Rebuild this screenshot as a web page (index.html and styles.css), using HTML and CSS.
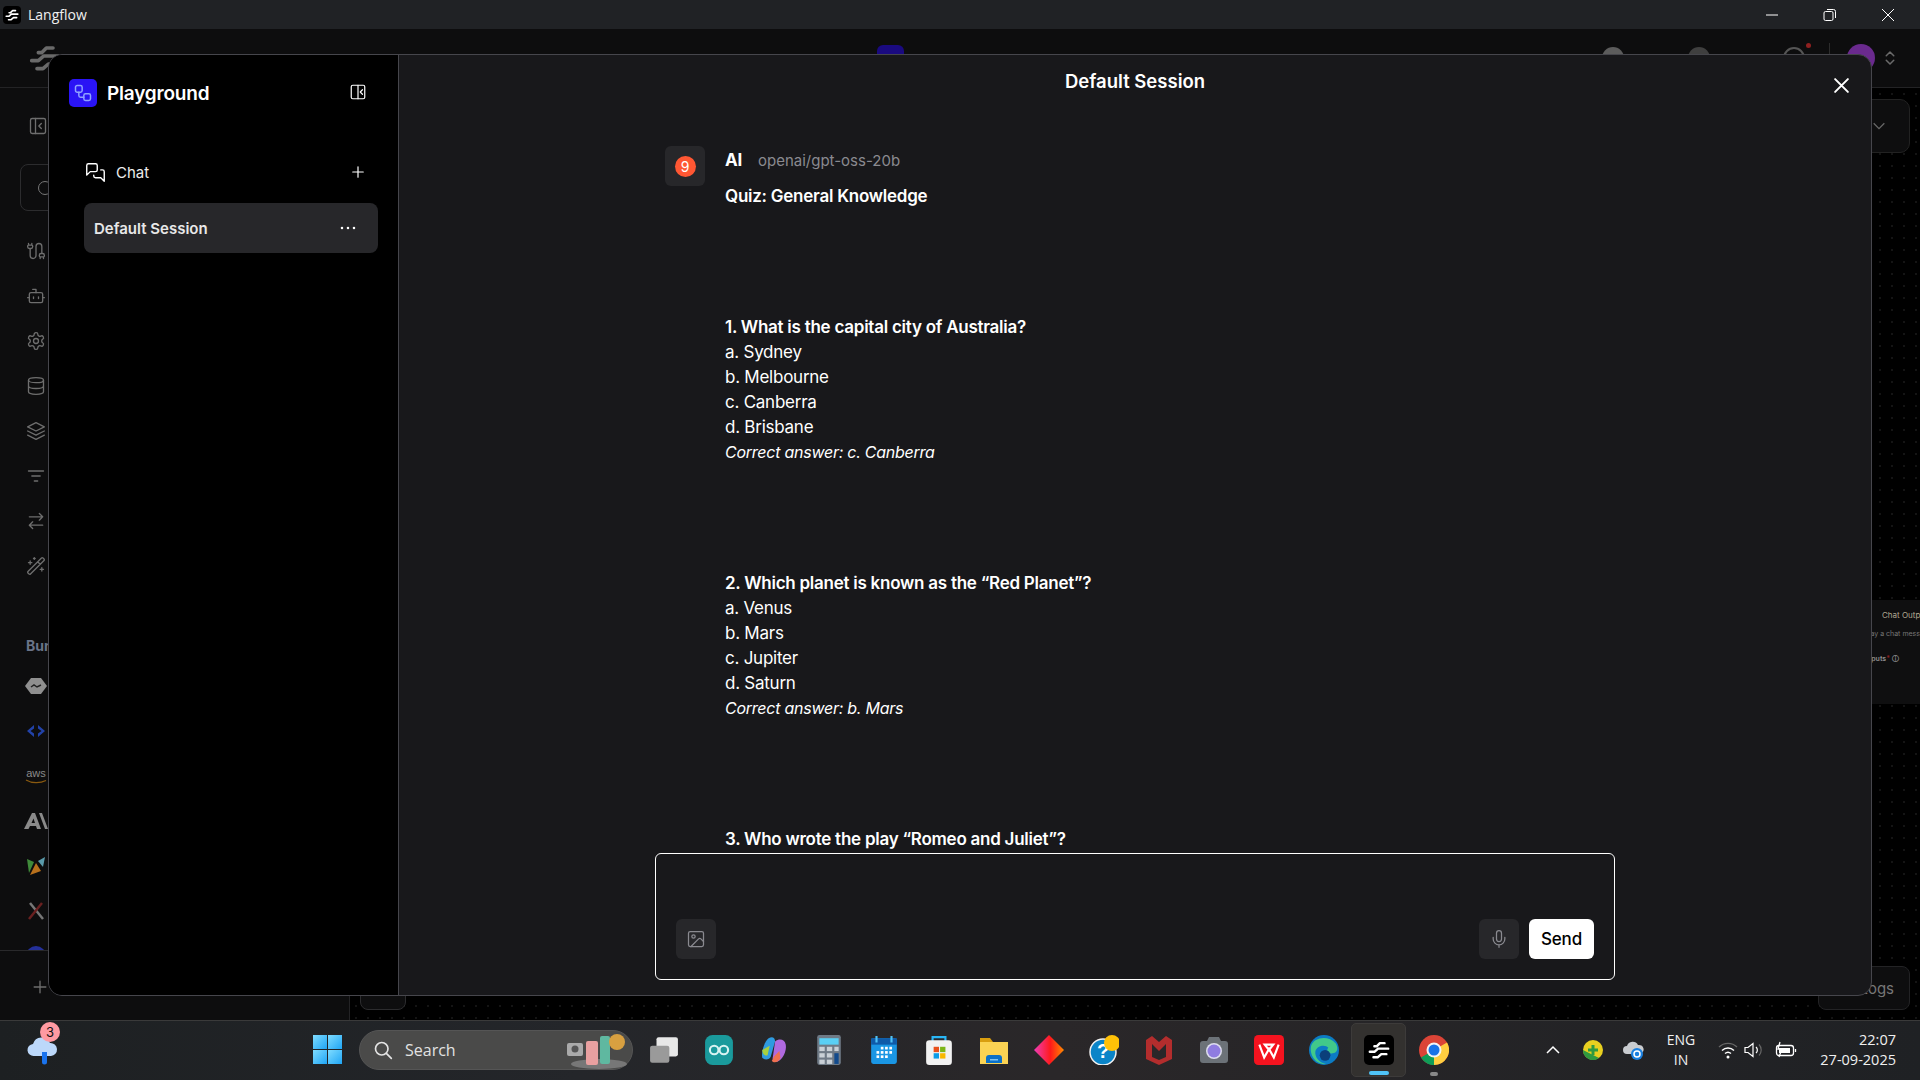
FILE: index.html
```html
<!DOCTYPE html>
<html lang="en">
<head>
<meta charset="utf-8">
<title>Langflow</title>
<link rel="stylesheet" href="styles.css">
</head>
<body>
<svg class="defs" width="0" height="0" aria-hidden="true">
  <symbol id="lf" viewBox="0 0 24 24"><path d="M7 8h2.500L13 4.500h5M2 14h5l4-3.500h11M6 20h4.500l4-3.500H20" fill="none" stroke="currentColor" stroke-width="2.700" stroke-linecap="round" stroke-linejoin="round"/></symbol>
</svg>

<header class="titlebar">
  <div class="tb-app">
    <span class="tb-appicon"><svg class="i-14"><use href="#lf"/></svg></span>
    <span class="tb-name">Langflow</span>
  </div>
  <div class="winctl">
    <span class="winbtn"><svg width="14" height="14" viewBox="0 0 14 14"><path d="M1 7h12" stroke="#fff" stroke-width="1"/></svg></span>
    <span class="winbtn"><svg width="14" height="14" viewBox="0 0 14 14" fill="none" stroke="#fff" stroke-width="1"><rect x="1" y="3.5" width="9" height="9" rx="1.5"/><path d="M4 1.5h6.5a2 2 0 0 1 2 2V10"/></svg></span>
    <span class="winbtn"><svg width="14" height="14" viewBox="0 0 14 14"><path d="M1 1l12 12M13 1L1 13" stroke="#fff" stroke-width="1"/></svg></span>
  </div>
</header>

<div class="app">
  <div class="appheader">
    <svg class="applogo"><use href="#lf"/></svg>
    <span class="crumb-icon"></span>
    <div class="apphead-right">
      <span class="peek peek-a"></span>
      <span class="peek peek-b"></span>
      <span class="peek-bell"><i class="reddot"></i></span>
      <span class="headdiv"></span>
      <span class="avatar"></span>
      <svg class="chev" viewBox="0 0 24 24" fill="none" stroke="currentColor" stroke-width="2" stroke-linecap="round" stroke-linejoin="round"><path d="M7 15l5 5 5-5M7 9l5-5 5 5"/></svg>
    </div>
  </div>
  <div class="appbody">
    <aside class="appside">
      <div class="appside-top">
        <svg class="dim-ic" viewBox="0 0 24 24"><rect x="3" y="3" width="18" height="18" rx="2"/><path d="M9 3v18M16 15l-3-3 3-3"/></svg>
      </div>
      <div class="searchbox"><span class="searchdot"></span></div>
      <nav class="navicons">
        <svg class="dim-ic" viewBox="0 0 24 24"><path d="M17 21v-2a1 1 0 0 1-1-1v-1a2 2 0 0 1 2-2h2a2 2 0 0 1 2 2v1a1 1 0 0 1-1 1M19 15V6.5a1 1 0 0 0-7 0v11a1 1 0 0 1-7 0V9M21 21v-2h-4M3 5h4V3M7 5a1 1 0 0 1 1 1v1a2 2 0 0 1-2 2H4a2 2 0 0 1-2-2V6a1 1 0 0 1 1-1V3"/></svg>
        <svg class="dim-ic" viewBox="0 0 24 24"><path d="M12 8V4H8M2 14h2M20 14h2M15 13v2M9 13v2"/><rect x="4" y="8" width="16" height="12" rx="2"/></svg>
        <svg class="dim-ic" viewBox="0 0 24 24"><path d="M12.22 2h-.44a2 2 0 0 0-2 2v.18a2 2 0 0 1-1 1.73l-.43.25a2 2 0 0 1-2 0l-.15-.08a2 2 0 0 0-2.73.73l-.22.38a2 2 0 0 0 .73 2.73l.15.1a2 2 0 0 1 1 1.72v.51a2 2 0 0 1-1 1.74l-.15.09a2 2 0 0 0-.73 2.73l.22.38a2 2 0 0 0 2.73.73l.15-.08a2 2 0 0 1 2 0l.43.25a2 2 0 0 1 1 1.73V20a2 2 0 0 0 2 2h.44a2 2 0 0 0 2-2v-.18a2 2 0 0 1 1-1.73l.43-.25a2 2 0 0 1 2 0l.15.08a2 2 0 0 0 2.73-.73l.22-.39a2 2 0 0 0-.73-2.73l-.15-.08a2 2 0 0 1-1-1.74v-.5a2 2 0 0 1 1-1.74l.15-.09a2 2 0 0 0 .73-2.73l-.22-.38a2 2 0 0 0-2.73-.73l-.15.08a2 2 0 0 1-2 0l-.43-.25a2 2 0 0 1-1-1.73V4a2 2 0 0 0-2-2z"/><circle cx="12" cy="12" r="3"/></svg>
        <svg class="dim-ic" viewBox="0 0 24 24"><ellipse cx="12" cy="5" rx="9" ry="3"/><path d="M3 5v14a9 3 0 0 0 18 0V5M3 12a9 3 0 0 0 18 0"/></svg>
        <svg class="dim-ic" viewBox="0 0 24 24"><path d="M12 2 2 7l10 5 10-5-10-5ZM2 17l10 5 10-5M2 12l10 5 10-5"/></svg>
        <svg class="dim-ic" viewBox="0 0 24 24"><path d="M3 6h18M7 12h10M10 18h4"/></svg>
        <svg class="dim-ic" viewBox="0 0 24 24"><path d="M16 3l4 4-4 4M20 7H4M8 21l-4-4 4-4M4 17h16"/></svg>
        <svg class="dim-ic" viewBox="0 0 24 24"><path d="M21.64 3.64l-1.28-1.28a1.21 1.21 0 0 0-1.72 0L2.36 18.64a1.21 1.21 0 0 0 0 1.72l1.28 1.28a1.2 1.2 0 0 0 1.72 0L21.64 5.36a1.2 1.2 0 0 0 0-1.72M14 7l3 3M5 6v4M19 14v4M10 2v2M7 8H3M21 16h-4M11 3H9"/></svg>
      </nav>
      <div class="bundle-title">Bundles</div>
      <div class="bundle-list">
        <svg class="logo" viewBox="0 0 24 24"><path d="M7 4h10l6 8-6 8H7l-6-8z" fill="#8f8f8f"/><path d="M7 13l3-2 3 2 4-2" fill="none" stroke="#222" stroke-width="1.5"/></svg>
        <svg class="logo" viewBox="0 0 24 24"><path d="M10 6l-7 6 7 6V14.500L6.500 12 10 9.500zM14 6l7 6-7 6v-3.500l3.500-2.500L14 9.500z" fill="#2242a8"/></svg>
        <svg class="logo" viewBox="0 0 24 24"><text x="12" y="13" class="logo-aws">aws</text><path d="M2 16c6 3.500 14 3.500 20 .5" fill="none" stroke="#8a5a10" stroke-width="1.300"/></svg>
        <svg class="logo" viewBox="0 0 24 24"><path d="M0 20L8 4h3l6 16h-4l-1-3H6l-1.500 3zM7.500 14h3.500L9.500 9.500zM15 4h3l6 16h-3z" fill="#8a8a8a"/></svg>
        <svg class="logo" viewBox="0 0 24 24"><path d="M3 5l7 3-5 11z" fill="#3f8a3a"/><path d="M21 3l-2 10-5-6z" fill="#5a9aaa"/><path d="M12 9l5 8-11 4z" fill="#b8701c"/></svg>
        <svg class="logo" viewBox="0 0 24 24"><path d="M6 4l13 16" fill="none" stroke="#777" stroke-width="2.500"/><path d="M18 4L5 20" fill="none" stroke="#6a2020" stroke-width="2.500"/></svg>
        <svg class="logo" viewBox="0 0 24 24"><circle cx="12" cy="12" r="10" fill="#24309a"/></svg>
      </div>
      <div class="appside-foot">
        <svg class="dim-ic" viewBox="0 0 24 24"><path d="M5 12h14M12 5v14"/></svg>
      </div>
    </aside>
    <main class="canvas">
      <span class="cv-drop"><svg class="cv-chev" viewBox="0 0 24 24" fill="none" stroke="currentColor" stroke-width="2"><path d="M4 8l8 8 8-8"/></svg></span>
      <div class="cv-node">
        <div class="cv-node-title">Chat Output</div>
        <div class="cv-node-desc">Display a chat message</div>
        <div class="cv-node-row">Inputs<i class="cv-req">*</i> ⓘ</div>
      </div>
      <span class="cv-tab"></span>
      <span class="cv-logs">Logs</span>
    </main>
  </div>

  <section class="modal">
    <aside class="pg-side">
      <div class="pg-head">
        <div class="pg-brand">
          <span class="pg-logo"><svg viewBox="0 0 24 24" fill="none" stroke="#8fa2ff" stroke-width="1.800" stroke-linecap="round"><rect x="3" y="3" width="8" height="8" rx="2"/><path d="M7 11v4a2 2 0 0 0 2 2h4"/><rect x="13" y="13" width="8" height="8" rx="2"/></svg></span>
          <span class="pg-title">Playground</span>
        </div>
        <svg class="wh-ic ic-16 pg-collapse" viewBox="0 0 24 24"><rect x="3" y="3" width="18" height="18" rx="2"/><path d="M12 3v18M18 15l-3-3 3-3"/></svg>
      </div>
      <div class="pg-chat">
        <div class="pg-chatlabel">
          <svg class="wh-ic ic-20" viewBox="0 0 24 24"><path d="M14 9a2 2 0 0 1-2 2H6l-4 4V4a2 2 0 0 1 2-2h8a2 2 0 0 1 2 2zM18 9h2a2 2 0 0 1 2 2v11l-4-4h-6a2 2 0 0 1-2-2v-1"/></svg>
          <span>Chat</span>
        </div>
        <svg class="wh-ic ic-16" viewBox="0 0 24 24"><path d="M5 12h14M12 5v14"/></svg>
      </div>
      <div class="pg-session">
        <span>Default Session</span>
        <svg class="ic-16" viewBox="0 0 24 24" fill="#fff"><circle cx="4" cy="12" r="1.700"/><circle cx="12" cy="12" r="1.700"/><circle cx="20" cy="12" r="1.700"/></svg>
      </div>
    </aside>
    <div class="pg-main">
      <header class="pg-mainhead">
        <h1>Default Session</h1>
        <svg class="wh-ic ic-close" viewBox="0 0 24 24"><path d="M3 3l18 18M21 3L3 21"/></svg>
      </header>
      <div class="messages">
        <article class="msg">
          <div class="msg-avatar"><span class="msg-dot">9</span></div>
          <div class="msg-body">
            <div class="msg-meta"><b>AI</b><span>openai/gpt-oss-20b</span></div>
            <p class="para"><strong>Quiz: General Knowledge</strong></p>
            <p class="para"><strong>1. What is the capital city of Australia?</strong><br><span class="opt">a. Sydney</span><br><span class="opt">b. Melbourne</span><br><span class="opt">c. Canberra</span><br><span class="opt">d. Brisbane</span><br><em>Correct answer: c. Canberra</em></p>
            <p class="para"><strong>2. Which planet is known as the “Red Planet”?</strong><br><span class="opt">a. Venus</span><br><span class="opt">b. Mars</span><br><span class="opt">c. Jupiter</span><br><span class="opt">d. Saturn</span><br><em>Correct answer: b. Mars</em></p>
            <p class="para"><strong>3. Who wrote the play “Romeo and Juliet”?</strong></p>
          </div>
        </article>
      </div>
      <div class="composer">
        <span class="cbtn"><svg class="ic-18" viewBox="0 0 24 24"><rect x="3" y="3" width="18" height="18" rx="2"/><circle cx="9" cy="9" r="2"/><path d="M21 15l-3.086-3.086a2 2 0 0 0-2.828 0L6 21"/></svg></span>
        <div class="composer-right">
          <span class="cbtn"><svg class="ic-18" viewBox="0 0 24 24"><path d="M12 2a3 3 0 0 0-3 3v7a3 3 0 0 0 6 0V5a3 3 0 0 0-3-3ZM19 10v2a7 7 0 0 1-14 0v-2M12 19v3"/></svg></span>
          <span class="send">Send</span>
        </div>
      </div>
    </div>
  </section>
</div>

<footer class="taskbar">
  <div class="tk-widget">
    <span class="weather">
      <svg class="weather-ic" viewBox="0 0 32 36"><path d="M8 24a6 6 0 0 1-1-12 9 9 0 0 1 17-1 6.500 6.500 0 0 1 1 13z" fill="#bcd8fa"/><path d="M16 20h5v10a2.500 2.500 0 0 1-5 0z" fill="#1a73ee"/></svg>
      <i class="weather-badge">3</i>
    </span>
  </div>
  <span class="tk-start"><i></i><i></i><i></i><i></i></span>
  <div class="tk-search">
    <svg class="tk-search-ic" viewBox="0 0 24 24" fill="none" stroke="#e4e4e4" stroke-width="2" stroke-linecap="round"><circle cx="10.500" cy="10.500" r="7.500"/><path d="M16 16l6 6"/></svg>
    <span>Search</span>
    <svg class="tk-search-art" viewBox="0 0 60 40"><ellipse cx="32" cy="34" rx="28" ry="5" fill="#777"/><rect x="0" y="13" width="16" height="13" rx="2" fill="#aaa" /><circle cx="8" cy="19" r="3.500" fill="#555"/><rect x="19" y="11" width="12" height="24" rx="2" fill="#e9a0a0"/><rect x="33" y="6" width="10" height="28" rx="2" fill="#5fb8a0"/><circle cx="50" cy="12" r="8" fill="#d8a040"/></svg>
  </div>
  <div class="tk-apps">
    <span class="tk-app"><svg viewBox="0 0 28 28"><rect x="7" y="2" width="20" height="18" rx="2" fill="#e8e8e8"/><rect x="1" y="10" width="18" height="16" rx="2" fill="#9a9a9a"/></svg></span>
    <span class="tk-app"><svg viewBox="0 0 28 28" fill="none"><rect x="1" y="0" width="26" height="28" rx="7" fill="#1a9a9c"/><circle cx="9.500" cy="14" r="4" stroke="#d9f3f2" stroke-width="2"/><circle cx="18.500" cy="14" r="4" stroke="#d9f3f2" stroke-width="2"/></svg></span>
    <span class="tk-app"><svg viewBox="0 0 28 28"><path d="M9 3c3-2 6-1 6 3l-4 14c-1 3-6 4-8 1-1-5 2-15 6-18z" fill="#2f9be0"/><path d="M3 14c0 3 2 6 5 5l2-9z" fill="#a8d040"/><path d="M15 6c4-3 9-2 10 3 1 6-3 14-8 16-3 0-5-2-4-5z" fill="#b06ae0"/><path d="M14 20l5-5 1 6c-1 4-6 6-8 3z" fill="#f07050"/></svg></span>
    <span class="tk-app"><svg viewBox="0 0 28 28"><rect x="3" y="0" width="22" height="28" rx="2" fill="#6f7a86"/><rect x="5" y="3" width="18" height="6" fill="#5ad0f5"/><g fill="#c9d0d6"><rect x="5" y="11" width="5" height="4"/><rect x="12" y="11" width="5" height="4"/><rect x="19" y="11" width="4" height="4"/><rect x="5" y="17" width="5" height="4"/><rect x="12" y="17" width="5" height="4"/><rect x="5" y="23" width="5" height="4"/><rect x="12" y="23" width="5" height="4"/></g><rect x="19" y="17" width="4" height="10" fill="#124a8c"/></svg></span>
    <span class="tk-app"><svg viewBox="0 0 28 28"><rect x="2" y="3" width="24" height="24" rx="2" fill="#1a96e4"/><rect x="2" y="3" width="24" height="6" fill="#0f5aa8"/><path d="M7 1v6M21 1v6" stroke="#4fc3f7" stroke-width="2"/><g fill="#fff"><rect x="11" y="11" width="2.500" height="2.500"/><rect x="15" y="11" width="2.500" height="2.500"/><rect x="19" y="11" width="2.500" height="2.500"/><rect x="7" y="15" width="2.500" height="2.500"/><rect x="11" y="15" width="2.500" height="2.500"/><rect x="15" y="15" width="2.500" height="2.500"/><rect x="19" y="15" width="2.500" height="2.500"/><rect x="7" y="19" width="2.500" height="2.500"/><rect x="11" y="19" width="2.500" height="2.500"/><rect x="15" y="19" width="2.500" height="2.500"/></g></svg></span>
    <span class="tk-app"><svg viewBox="0 0 28 28"><path d="M8 6V2h12v4" fill="none" stroke="#29b6f6" stroke-width="2"/><rect x="2" y="5" width="24" height="23" rx="3" fill="#f2f2f2"/><rect x="9" y="11" width="5" height="5" fill="#e8501c"/><rect x="15" y="11" width="5" height="5" fill="#7cb518"/><rect x="9" y="17" width="5" height="5" fill="#0a9be8"/><rect x="15" y="17" width="5" height="5" fill="#f8b800"/></svg></span>
    <span class="tk-app"><svg viewBox="0 0 30 28"><path d="M1 2h10l3 4h15v22H1z" fill="#d99e0f"/><rect x="1" y="6" width="28" height="22" fill="#fbd353"/><path d="M7 27v-5a3 3 0 0 1 3-3h10a3 3 0 0 1 3 3v5z" fill="#0a70c8"/><rect x="11" y="23" width="8" height="1.500" fill="#7cc4f5"/></svg></span>
    <span class="tk-app"><svg viewBox="0 0 30 30"><defs><linearGradient id="dia" x1="0" x2="1" y1="0" y2="0"><stop offset="0" stop-color="#ee3db8"/><stop offset=".55" stop-color="#ff1a1a"/><stop offset="1" stop-color="#ff8a00"/></linearGradient></defs><path d="M15 0l15 15-15 15L0 15z" fill="url(#dia)"/></svg></span>
    <span class="tk-app tk-help"><svg viewBox="0 0 30 30"><circle cx="14" cy="17" r="13" fill="#0a84c8" stroke="#f0f0f0" stroke-width="1.500"/><text x="14" y="23" class="help-q">?</text><circle cx="23" cy="8" r="8" fill="#ffc107"/></svg></span>
    <span class="tk-app"><svg viewBox="0 0 28 30"><path d="M1 5l6-4 7 6 7-6 6 4v19l-13 6-13-6z" fill="#b32d2d"/><path d="M7 9l7 7 7-7v13l-7 3-7-3z" fill="#2a2729"/></svg></span>
    <span class="tk-app"><svg viewBox="0 0 30 28"><rect x="1" y="5" width="28" height="22" rx="3" fill="#6c7278"/><path d="M8 5l2-4h10l2 4z" fill="#6c7278"/><circle cx="15" cy="15" r="8" fill="#dde"/><circle cx="15" cy="15" r="6.500" fill="#8f7ce0"/></svg></span>
    <span class="tk-app"><svg viewBox="0 0 28 28"><rect x="0" y="0" width="28" height="28" rx="4" fill="#f5131f"/><path d="M5 9l4.500 12L14 13l4.500 8L23 9M10 9h8l-4 5z" fill="none" stroke="#fff" stroke-width="2"/></svg></span>
    <span class="tk-app"><svg viewBox="0 0 28 28"><circle cx="14" cy="14" r="14" fill="#0c7bc4"/><path d="M2 10c3-8 16-10 23-2 3 5 1 9-3 9-5 1-6-3-4-5-2-3-10-3-12 3-1 5 3 11 10 12C6 28 0 18 2 10z" fill="#41c98a"/><circle cx="15" cy="19" r="5" fill="#0b3f7a"/></svg></span>
    <span class="tk-app tk-active"><span class="tk-lficon"><svg class="i-20"><use href="#lf"/></svg></span><i class="tk-run tk-run-on"></i></span>
    <span class="tk-app tk-open"><svg viewBox="0 0 30 30"><circle cx="15" cy="15" r="15" fill="#db4437"/><path d="M15 15L2 22.500A15 15 0 0 0 17 30z" fill="#0f9d58"/><path d="M15 15l13-7.500A15 15 0 0 1 15 30z" fill="#ffcd40"/><circle cx="15" cy="15" r="7.500" fill="#f4f4f4"/><circle cx="15" cy="15" r="5.500" fill="#1a73e8"/></svg><i class="tk-run"></i></span>
  </div>
  <div class="tray">
    <span class="tray-item w40"><svg width="14" height="14" viewBox="0 0 14 14" fill="none" stroke="#fff" stroke-width="1.500"><path d="M1 10l6-6 6 6"/></svg></span>
    <span class="tray-item w40"><svg width="20" height="20" viewBox="0 0 20 20"><circle cx="10" cy="10" r="10" fill="#e8d020"/><path d="M0 10a10 10 0 0 0 16 8L10 15z" fill="#2f9a40"/><path d="M10 5v10M5 10h10" stroke="#2f9a40" stroke-width="3"/></svg></span>
    <span class="tray-item w40"><svg width="22" height="20" viewBox="0 0 22 20"><path d="M5 14a4 4 0 0 1 0-8 6 6 0 0 1 11-1 4.500 4.500 0 0 1 2 9z" fill="#c9ccd0"/><circle cx="15" cy="14" r="6" fill="#1a80e0"/><circle cx="15" cy="14" r="3" fill="none" stroke="#fff" stroke-width="1.500"/></svg></span>
    <span class="tray-lang">ENG<br>IN</span>
    <span class="tray-item w30"><svg width="20" height="18" viewBox="0 0 20 18" fill="none" stroke="#fff" stroke-width="1.400"><path d="M1 6a13 13 0 0 1 18 0" stroke="#666"/><path d="M4 9.500a8.500 8.500 0 0 1 12 0"/><path d="M7 12.500a4.500 4.500 0 0 1 6 0"/><circle cx="10" cy="16" r=".8" fill="#fff"/></svg></span>
    <span class="tray-item w22"><svg width="20" height="18" viewBox="0 0 20 18" fill="none" stroke="#fff" stroke-width="1.200"><path d="M1 6.500h3L9 2.500v13L4 11.500H1z"/><path d="M12 6a4 4 0 0 1 0 6"/><path d="M15 3.500a8 8 0 0 1 0 11" stroke="#666"/></svg></span>
    <span class="tray-item w42"><svg width="22" height="18" viewBox="0 0 22 18" fill="none" stroke="#fff" stroke-width="1.300"><rect x="1.500" y="4.500" width="17" height="10" rx="2.500"/><path d="M20.500 8v3"/><path d="M5 1L3 8h4l-3 8" stroke="#fff"/><rect x="4" y="7" width="11" height="5" fill="#fff" stroke="none"/></svg></span>
    <span class="clock"><span>22:07</span><span>27-09-2025</span></span>
  </div>
</footer>
</body>
</html>
```

FILE: styles.css
```css
* { box-sizing: border-box; }
html, body { margin: 0; height: 100%; }
body {
  width: 1920px;
  height: 1080px;
  overflow: hidden;
  display: flex;
  flex-direction: column;
  background: #000;
  color: #fff;
  font-family: Inter, "Liberation Sans", sans-serif;
}
svg { display: block; flex: none; }
.defs { position: absolute; }
.i-14 { width: 14px; height: 14px; }
.i-20 { width: 22px; height: 22px; }

/* window title bar */
.titlebar {
  height: 29px;
  flex: none;
  background: #202225;
  display: flex;
  align-items: center;
  justify-content: space-between;
  padding-left: 3px;
}
.tb-app { display: flex; align-items: center; gap: 7px; }
.tb-appicon {
  width: 18px; height: 18px;
  background: #000;
  border-radius: 4px;
  display: flex; align-items: center; justify-content: center;
  color: #fff;
}
.tb-name { font-family: "Open Sans", sans-serif; font-size: 14px; color: #f0f0f0; }
.winctl { display: flex; padding-right: 3px; }
.winbtn { width: 58px; display: flex; justify-content: center; }

/* dimmed application behind the modal */
.app { flex: 1; min-height: 0; position: relative; display: flex; flex-direction: column; background: #0d0d0e; }
.appheader {
  height: 59px;
  flex: none;
  border-bottom: 1px solid #232325;
  display: flex;
  align-items: center;
  padding-left: 29px;
}
.applogo { width: 32px; height: 32px; color: #6a6a6a; }
.crumb-icon { width: 27px; height: 27px; margin-left: 816px; background: #1a0a80; border-radius: 6px; }
.apphead-right { margin-left: auto; display: flex; align-items: center; height: 100%; }
.peek { width: 22px; height: 22px; border-radius: 50%; background: #5c5c5c; }
.peek-a { margin-right: 64px; }
.peek-b { margin-right: 73px; background: #3f3f3f; }
.peek-bell { width: 22px; height: 22px; border-radius: 50%; border: 2px solid #555; position: relative; }
.reddot { position: absolute; right: -8px; top: -6px; width: 5px; height: 5px; border-radius: 50%; background: #8f2020; }
.headdiv { width: 1px; height: 30px; background: #2c2c2c; margin-left: 24px; margin-right: 17px; }
.avatar { width: 28px; height: 28px; border-radius: 50%; background: #6a2a8e; }
.chev { width: 18px; height: 18px; color: #6a6a6a; margin: 0 21px 0 6px; }
.appbody { flex: 1; min-height: 0; display: flex; }
.appside {
  width: 350px;
  flex: none;
  border-right: 1px solid #232325;
  display: flex;
  flex-direction: column;
}
.dim-ic {
  width: 20px; height: 20px;
  fill: none;
  stroke: #6e6e6e;
  stroke-width: 1.600;
  stroke-linecap: round;
  stroke-linejoin: round;
}
.appside-top { padding: 28px 0 0 28px; height: 76px; }
.searchbox {
  margin-left: 20px;
  width: 300px;
  height: 47px;
  border: 1px solid #2c2c2e;
  border-radius: 8px;
  display: flex;
  align-items: center;
  padding-left: 17px;
}
.searchdot { width: 14px; height: 14px; border-radius: 50%; border: 1.500px solid #777; }
.navicons { display: flex; flex-direction: column; gap: 25px; padding: 30px 0 0 26px; }
.bundle-title { font-size: 14px; font-weight: 700; color: #6a7488; padding: 60px 0 0 26px; line-height: 20px; }
.bundle-list {
  flex: 1;
  min-height: 0;
  overflow: hidden;
  display: flex;
  flex-direction: column;
  gap: 21px;
  padding: 18px 0 0 24px;
}
.logo { width: 24px; height: 24px; }
.logo-aws { font: 11px "Liberation Sans", sans-serif; fill: #8a8a8a; text-anchor: middle; }
.appside-foot { height: 70px; flex: none; border-top: 1px solid #29292b; padding: 26px 0 0 30px; }
.canvas {
  flex: 1;
  position: relative;
  background-color: #000;
  background-image: radial-gradient(circle, #1f1f1f 0.6px, transparent 0.9px);
  background-size: 12px 12px;
}
.cv-drop {
  position: absolute; left: 1470px; top: 11px;
  width: 90px; height: 54px;
  background: #0e0e0f;
  border: 1px solid #222;
  border-radius: 10px;
  color: #666;
  display: flex; align-items: center; justify-content: flex-end;
  padding-right: 22px;
}
.cv-chev { width: 16px; height: 16px; }
.cv-node {
  position: absolute; left: 1350px; top: 512px;
  width: 240px; height: 104px;
  background: #0f0f10;
  overflow: hidden;
  color: #8e8e8e;
}
.cv-node-title { font-size: 8px; line-height: 14px; color: #b0a890; position: absolute; left: 182px; top: 8px; white-space: nowrap; }
.cv-node-desc { font-size: 7px; line-height: 12px; position: absolute; left: 154px; top: 28px; white-space: nowrap; color: #777; }
.cv-node-row { font-size: 7px; line-height: 12px; font-weight: 600; position: absolute; left: 165px; top: 53px; white-space: nowrap; }
.cv-req { color: #8f2020; font-style: normal; }
.cv-tab {
  position: absolute; left: 10px; top: 872px;
  width: 46px; height: 50px;
  background: #0e0e0f;
  border: 1px solid #2c2c2e;
  border-radius: 8px;
}
.cv-logs {
  position: absolute; left: 1468px; top: 878px;
  width: 92px; height: 44px;
  background: #0e0e0f;
  border: 1px solid #232325;
  border-radius: 8px;
  font-size: 15px;
  color: #777;
  display: flex; align-items: center; justify-content: flex-end;
  padding-right: 15px;
}

/* playground modal */
.modal {
  position: absolute;
  left: 48px;
  top: 25px;
  width: 1824px;
  height: 942px;
  display: flex;
  background: #18181b;
  border: 1px solid #46464c;
  border-radius: 14px;
  overflow: hidden;
}
.pg-side { width: 350px; flex: none; background: #000; border-right: 1px solid #46464c; padding: 24px 20px 0 20px; }
.pg-head { display: flex; align-items: center; justify-content: space-between; padding-right: 11px; }
.pg-brand { display: flex; align-items: center; gap: 10px; }
.pg-logo { width: 28px; height: 28px; border-radius: 5px; background: #2a14f5; display: flex; align-items: center; justify-content: center; }
.pg-logo svg { width: 20px; height: 20px; }
.pg-title { font-size: 19px; font-weight: 600; letter-spacing: -0.2px; }
.pg-collapse { margin-bottom: 2px; }
.wh-ic { fill: none; stroke: #fff; stroke-width: 1.600; stroke-linecap: round; stroke-linejoin: round; }
.ic-16 { width: 18px; height: 18px; }
.ic-18 { width: 20px; height: 20px; fill: none; stroke: #8a8a90; stroke-width: 1.500; stroke-linecap: round; stroke-linejoin: round; }
.ic-20 { width: 21px; height: 21px; }
.pg-chat { margin-top: 52px; padding: 0 11px 0 16px; display: flex; align-items: center; justify-content: space-between; height: 26px; }
.pg-chatlabel { display: flex; align-items: center; gap: 10px; font-size: 15px; color: #ececec; }
.pg-session {
  margin: 18px 0 0 15px;
  width: 294px;
  height: 50px;
  border-radius: 8px;
  background: #27272a;
  display: flex;
  align-items: center;
  justify-content: space-between;
  padding: 0 21px 0 10px;
  font-size: 15px;
  font-weight: 600;
  color: #e8e8e8;
}
.pg-main { flex: 1; min-width: 0; display: flex; flex-direction: column; padding-bottom: 15px; }
.pg-mainhead { height: 46px; flex: none; display: flex; align-items: flex-start; justify-content: center; position: relative; }
.pg-mainhead h1 { margin: 14px 0 0; font-size: 18.500px; line-height: 24px; font-weight: 600; letter-spacing: 0; }
.ic-close { width: 17px; height: 17px; stroke-width: 2.800; position: absolute; right: 21px; top: 22px; }
.messages { flex: 1; min-height: 0; overflow: hidden; padding: 0 0 0 266px; }
.msg { display: flex; gap: 20px; padding-top: 45px; }
.msg-avatar {
  width: 40px; height: 40px;
  border-radius: 6px;
  background: #27272a;
  display: flex; align-items: center; justify-content: center;
  flex: none;
}
.msg-dot {
  width: 21px; height: 21px;
  border-radius: 50%;
  background: #ff5733;
  font-size: 14px;
  line-height: 21px;
  text-align: center;
}
.msg-body { width: 880px; font-size: 16px; line-height: 25px; letter-spacing: -0.25px; color: #fff; }
.msg-meta { display: flex; align-items: center; gap: 16px; height: 25px; margin-top: 2px; }
.msg-meta b { font-size: 17px; font-weight: 700; }
.msg-meta span { font-size: 15px; font-weight: 400; color: #8a8a90; letter-spacing: 0; }
.para { margin: 0 0 106px; }
.msg-meta + .para { margin-top: 11px; }
.para strong { font-size: 17px; font-weight: 600; }
.opt { font-size: 17px; }
.composer {
  width: 960px;
  height: 127px;
  flex: none;
  margin: 0 auto;
  border: 1px solid #fff;
  border-radius: 6px;
  background: #18181b;
  display: flex;
  align-items: flex-end;
  justify-content: space-between;
  padding: 0 20px 20px;
}
.composer-right { display: flex; gap: 10px; }
.cbtn { width: 40px; height: 40px; border-radius: 6px; background: #27272a; display: flex; align-items: center; justify-content: center; }
.send {
  width: 65px; height: 40px;
  border-radius: 6px;
  background: #fff;
  color: #000;
  font-size: 17px;
  font-weight: 500;
  letter-spacing: -0.2px;
  display: flex; align-items: center; justify-content: center;
}

/* Windows taskbar */
.taskbar {
  height: 60px;
  flex: none;
  background: linear-gradient(90deg, #1d2022 0%, #24262a 30%, #2a2729 55%, #1f2124 100%);
  border-top: 1px solid #3a3a3a;
  display: flex;
  align-items: center;
  padding-bottom: 2px;
}
.tk-widget { width: 313px; padding-left: 26px; }
.weather { display: block; width: 32px; height: 36px; position: relative; }
.weather-ic { width: 32px; height: 36px; }
.weather-badge {
  position: absolute; left: 14px; top: -10px;
  width: 20px; height: 20px;
  border-radius: 50%;
  background: #ff9aa2;
  color: #111;
  font-size: 13px;
  font-style: normal;
  line-height: 20px;
  text-align: center;
}
.tk-start { width: 29px; height: 29px; display: grid; grid-template-columns: 1fr 1fr; gap: 1px; }
.tk-start i { display: block; background: linear-gradient(135deg, #7fdcff, #1fa5f5); }
.tk-search {
  width: 274px; height: 40px;
  margin-left: 17px;
  border-radius: 20px;
  background: #4a4a49;
  border: 1px solid #555;
  display: flex;
  align-items: center;
  padding-left: 13px;
  gap: 12px;
  font-family: "Open Sans", sans-serif;
  font-size: 16px;
  color: #e2e2e2;
}
.tk-search-ic { width: 20px; height: 20px; }
.tk-search-art { width: 60px; height: 40px; margin-left: auto; margin-right: 5px; }
.tk-apps { display: flex; margin-left: 3px; }
.tk-app { width: 55px; height: 54px; display: flex; align-items: center; justify-content: center; position: relative; border-radius: 5px; }
.tk-app > svg { width: 30px; height: 30px; }
.help-q { font: 700 20px "Liberation Sans", sans-serif; fill: #fff; text-anchor: middle; }
.tk-active { background: #33312f; border: 1px solid #3d3b3a; }
.tk-lficon { width: 30px; height: 30px; background: #000; border-radius: 5px; display: flex; align-items: center; justify-content: center; color: #fff; }
.tk-run { position: absolute; left: 50%; bottom: 1px; width: 8px; height: 4px; margin-left: -4px; border-radius: 2px; background: #888; }
.tk-run-on { width: 20px; margin-left: -10px; background: #4fc3f7; }
.tray { margin-left: auto; display: flex; align-items: center; padding-right: 24px; }
.tray-item { display: flex; justify-content: center; align-items: center; }
.w40 { width: 40px; }
.w30 { width: 30px; }
.w22 { width: 22px; }
.w42 { width: 42px; }
.tray-lang { width: 56px; margin-right: 4px; text-align: center; font-family: "Open Sans", sans-serif; font-size: 14px; line-height: 20px; color: #f0f0f0; }
.clock { width: 84px; margin-left: 5px; display: flex; flex-direction: column; align-items: flex-end; font-family: "Open Sans", sans-serif; font-size: 14.500px; line-height: 20px; color: #f0f0f0; }
```
